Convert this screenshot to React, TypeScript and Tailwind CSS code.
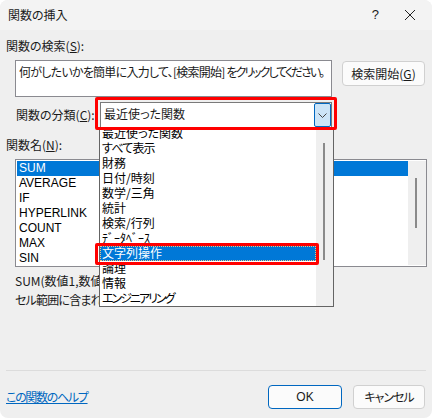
const font = "font-['Noto_Sans_CJK_JP','Liberation_Sans',sans-serif] [font-feature-settings:'palt']";

const functions = ["SUM", "AVERAGE", "IF", "HYPERLINK", "COUNT", "MAX", "SIN"];
const categories = [
  "最近使った関数",
  "すべて表示",
  "財務",
  "日付/時刻",
  "数学/三角",
  "統計",
  "検索/行列",
  "ﾃﾞｰﾀﾍﾞｰｽ",
  "文字列操作",
  "論理",
  "情報",
  "エンジニアリング",
];

function Dropdown() {
  return (
    <div className="absolute left-[99px] top-[127px] z-10 flex h-[180px] w-[235px] border-x border-b border-[#646464] bg-white">
      <ul className="-mt-px w-[216px] overflow-hidden pl-[2px]">
        {categories.map((c) => (
          <li
            key={c}
            className={
              c === "文字列操作"
                ? "-ml-[2px] h-[15px] bg-[#0078d7] pl-[2px] leading-[14px] text-white outline-1 -outline-offset-1 outline-dotted outline-[#f0c080]"
                : c === "エンジニアリング"
                  ? "h-[15px] leading-[14px] tracking-[-2px] text-black"
                  : c === "すべて表示"
                    ? "h-[15px] leading-[14px] tracking-[-0.8px] text-black"
                    : "h-[15px] leading-[14px] text-black"
            }
          >
            {c}
          </li>
        ))}
      </ul>
      <div className="flex-1 bg-[#efefef] pl-[7px] pt-[16px]">
        <div className="h-[117px] w-[2px] bg-[#8a8a8a]" />
      </div>
    </div>
  );
}

export default function App() {
  return (
    <div className={`relative h-[418px] w-[432px] overflow-hidden bg-white text-[12px] text-[#1a1a1a] ${font}`}>
      <div className="flex h-full flex-col rounded-lg bg-[#efefef]">
        <header className="flex h-[30px] items-center justify-between rounded-t-lg bg-[#f3f3f3] pl-[8px] pr-[16px]">
          <span>関数の挿入</span>
          <div className="flex items-center gap-[25px]">
            <span className="font-['Liberation_Sans'] text-[13px]">?</span>
            <svg width="12" height="12" viewBox="0 0 12 12" fill="none" stroke="#222" strokeWidth="1">
              <path d="M1 1l10 10M11 1L1 11" />
            </svg>
          </div>
        </header>

        <div className="flex flex-1 flex-col px-[6px]">
          <label className="mt-[8px] h-[16px] leading-[16px]">
            関数の検索(<span className="underline">S</span>):
          </label>
          <div className="mt-[6px] flex items-start gap-[10px] pl-[9px]">
            <div className="h-[37px] w-[317px] overflow-hidden whitespace-nowrap border border-[#8a8a90] bg-white pl-[3px] pt-[2px] leading-[18px] tracking-[-0.75px]">
              何がしたいかを簡単に入力して、[検索開始] <span className="tracking-[-2px]">をクリックしてください。</span>
            </div>
            <button className="mt-px h-[25px] w-[83px] rounded-[4px] border border-[#d0d0d0] bg-[#fbfbfb]">
              検索開始(<span className="underline">G</span>)
            </button>
          </div>

          <div className="mt-[5px] flex h-[26px] items-center pl-[10px]">
            <label className="w-[84px]">
              関数の分類(<span className="underline">C</span>):
            </label>
            <div className="flex h-[26px] w-[232px] items-center justify-between border border-[#7a7a7a] bg-white pl-[3px]">
              <span className="-mt-[2px]">最近使った関数</span>
              <div className="flex h-[24px] w-[17px] items-center justify-center rounded-[2px] border border-[#0067c0] bg-[#cce4f7]">
                <svg width="9" height="5" viewBox="0 0 9 5" fill="none" stroke="#444" strokeWidth="1">
                  <path d="M.5.5l4 4 4-4" />
                </svg>
              </div>
            </div>
          </div>

          <label className="mt-[9px] h-[16px] leading-[16px]">
            関数名(<span className="underline">N</span>):
          </label>
          <div className="ml-[9px] mt-[6px] flex h-[108px] w-[412px] border border-[#8a8a90] bg-white p-px pr-0">
            <ul className="w-[391px] font-['Liberation_Sans'] text-[12px]">
              {functions.map((f, i) => (
                <li
                  key={f}
                  className={i === 0 ? "h-[15px] bg-[#0078d7] pl-[2px] leading-[15px] text-white" : "h-[15px] pl-[2px] leading-[15px] text-black"}
                >
                  {f}
                </li>
              ))}
            </ul>
            <div className="flex-1 bg-[#efefef] pl-[7px] pt-[17px]">
              <div className="h-[50px] w-[2px] bg-[#8a8a8a]" />
            </div>
          </div>

          <p className="ml-[9px] mt-[4px] h-[19px] leading-[19px]">SUM(数値1,数値2,...)</p>
          <p className="ml-[9px] h-[19px] leading-[19px] tracking-[-0.8px]">セル範囲に含まれる数値をすべて合計します。</p>

          <div className="mt-[61px] border-t border-[#dcdcdc]" />
          <div className="mt-[14px] flex items-center justify-between pr-[1px]">
            <a className="tracking-[-1.3px] text-[#0067c0] underline">この関数のヘルプ</a>
            <div className="flex gap-[11px]">
              <button className="h-[24px] w-[74px] rounded-[4px] border-[1.5px] border-[#0067c0] bg-[#fbfbfb] font-['Liberation_Sans']">OK</button>
              <button className="h-[24px] w-[72px] rounded-[4px] border border-[#d0d0d0] bg-[#fbfbfb] tracking-[-1px]">キャンセル</button>
            </div>
          </div>
        </div>
      </div>

      <Dropdown />

      {/* red callouts */}
      <div className="pointer-events-none absolute left-[95px] top-[97px] z-20 h-[33px] w-[242px] rounded-[2px] border-[3px] border-[#ff0000]" />
      <div className="pointer-events-none absolute left-[95px] top-[243px] z-20 h-[22px] w-[224px] rounded-[2px] border-[3px] border-[#ff0000]" />
    </div>
  );
}
